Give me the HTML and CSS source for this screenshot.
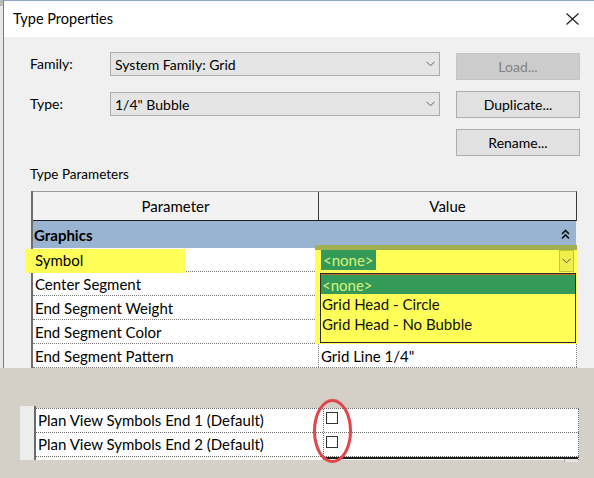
FILE: index.html
```html
<!DOCTYPE html>
<html>
<head>
<meta charset="utf-8">
<link rel="stylesheet" href="styles.css">
</head>
<body>
<div class="screen">
  <div class="top">
    <div class="edge"></div>
    <div class="win">
      <div class="titlebar">
        <span class="title">Type Properties</span>
        <svg class="close" width="13" height="12" viewBox="0 0 13 12"><path d="M0.5 0.5 L12.5 11.5 M12.5 0.5 L0.5 11.5" stroke="#1a1a1a" stroke-width="1.1" fill="none"/></svg>
      </div>
      <div class="content">
        <div class="form">
          <div class="lbl">Family:</div>
          <div class="combo c-first"><span>System Family: Grid</span><svg class="chev" width="9" height="6" viewBox="0 0 9 6"><path d="M0.5 0.8 L4.5 4.8 L8.5 0.8" stroke="#606060" stroke-width="1" fill="none"/></svg></div>
          <div class="btn disabled b-first">Load...</div>

          <div class="lbl l-second">Type:</div>
          <div class="combo c-second"><span>1/4" Bubble</span><svg class="chev" width="9" height="6" viewBox="0 0 9 6"><path d="M0.5 0.8 L4.5 4.8 L8.5 0.8" stroke="#606060" stroke-width="1" fill="none"/></svg></div>
          <div class="btn">Duplicate...</div>

          <div class="spacer"></div>
          <div class="spacer"></div>
          <div class="btn">Rename...</div>
        </div>
        <div class="tp-label">Type Parameters</div>
        <div class="ptable">
          <div class="thead">
            <div class="th th1">Parameter</div>
            <div class="th th2">Value</div>
          </div>
          <div class="group">
            <span>Graphics</span>
            <svg class="collapse" width="9" height="11" viewBox="0 0 9 11"><path d="M1 5 L4.5 1.5 L8 5 M1 9.5 L4.5 6 L8 9.5" stroke="#111" stroke-width="1.6" fill="none"/></svg>
          </div>
          <div class="row"><div class="c1"><span class="marked">Symbol</span></div><div class="c2"></div></div>
          <div class="row"><div class="c1">Center Segment</div><div class="c2"></div></div>
          <div class="row"><div class="c1">End Segment Weight</div><div class="c2"></div></div>
          <div class="row"><div class="c1">End Segment Color</div><div class="c2"></div></div>
          <div class="row"><div class="c1">End Segment Pattern</div><div class="c2">Grid Line 1/4"</div></div>
        </div>
      </div>
    </div>
  </div>

  <div class="bottom">
    <div class="strip"></div>
    <div class="btable">
      <div class="brow"><div class="b1">Plan View Symbols End 1 (Default)</div><div class="b2"><span class="check"></span></div></div>
      <div class="brow"><div class="b1">Plan View Symbols End 2 (Default)</div><div class="b2"><span class="check"></span></div></div>
      <div class="brow partial"><div class="b1"></div><div class="b2"><span class="field"></span><span class="mini"></span></div></div>
    </div>
  </div>

  <div class="hl-symbol"></div>

  <div class="dropdown">
    <div class="dd-bar"></div>
    <div class="dd-current">&lt;none&gt;</div>
    <div class="dd-btn"><svg width="9" height="6" viewBox="0 0 9 6"><path d="M0.5 0.8 L4.5 4.8 L8.5 0.8" stroke="#555" stroke-width="1" fill="none"/></svg></div>
    <div class="dd-list">
      <div class="dd-item sel">&lt;none&gt;</div>
      <div class="dd-item">Grid Head - Circle</div>
      <div class="dd-item">Grid Head - No Bubble</div>
    </div>
  </div>

  <div class="ring"></div>
</div>
</body>
</html>
```

FILE: styles.css
```css
* { box-sizing: border-box; }
html, body { margin: 0; padding: 0; }
body {
  width: 594px;
  height: 478px;
  overflow: hidden;
  font-family: "Segoe UI", Lato, "Liberation Sans", sans-serif;
  font-size: 15px;
  color: #000;
  background: #d4d0c8;
}
.screen {
  position: relative;
  width: 594px;
  height: 478px;
  display: flex;
  flex-direction: column;
}
.top {
  height: 368px;
  display: flex;
  overflow: hidden;
  flex-shrink: 0;
}
.edge {
  width: 3px;
  background: #e6e8e6;
  border-top: 6px solid #b9bdb9;
}
.win {
  flex: 1;
  border-left: 1px solid #4b86c9;
  border-top: 1px solid #8aa6c4;
  display: flex;
  flex-direction: column;
  background: #f0f0f0;
}
.titlebar {
  height: 37px;
  background: #fff;
  display: flex;
  align-items: center;
  justify-content: space-between;
  padding: 0 15px 2px 9px;
}
.title {
  font-size: 14.5px;
  color: #000;
}
.close { display: block; margin-top: 1px; }

.content {
  flex: 1;
  padding: 15px 0 0 26px;
}
.form {
  display: grid;
  grid-template-columns: 80px 330px 140px;
  grid-template-rows: 28px 27px 27px;
  row-gap: 11px;
  font-size: 14px;
}
.lbl {
  height: 24px;
  line-height: 24px;
}
.l-second { margin-top: 1px; }
.combo {
  height: 24px;
  background: #e5e5e5;
  border: 1px solid #acacac;
  display: flex;
  align-items: center;
  justify-content: space-between;
  padding: 0 4px 0 4px;
  font-size: 14px;
}
.c-second { margin-top: 1px; }
.chev { display: block; }
.btn {
  margin-left: 16px;
  height: 27px;
  background: #e1e1e1;
  border: 1px solid #adadad;
  display: flex;
  align-items: center;
  justify-content: center;
  font-size: 14px;
}
.btn.disabled {
  background: #cccccc;
  border-color: #c4c4c4;
  color: #838383;
}
.b-first { margin-top: 1px; }

.tp-label {
  margin-top: 9px;
  height: 18px;
  line-height: 18px;
  font-size: 13.5px;
  margin-left: 0;
}
.ptable {
  margin-top: 8px;
  margin-left: 1px;
  width: 546px;
  border-left: 2px solid #6e6e6e;
  background: #fff;
}
.thead {
  display: flex;
  height: 30px;
  border-top: 1px solid #9a9a9a;
  border-bottom: 1px solid #1e1e1e;
  border-right: 1px solid #3a3a3a;
  background: #f2f2f2;
}
.th {
  display: flex;
  align-items: center;
  justify-content: center;
}
.th1 { width: 286px; border-right: 1px solid #3a3a3a; }
.th2 { flex: 1; }
.group {
  height: 27px;
  background: #99b4d1;
  display: flex;
  align-items: center;
  justify-content: space-between;
  padding: 0 6px 0 1px;
  font-weight: bold;
  border-right: 1px solid #f0f0f0;
}
.collapse { display: block; }
.row {
  display: flex;
  height: 24px;
  border-bottom: 1px dotted #7a7a7a;
}
.c1 {
  width: 286px;
  padding-left: 2px;
  border-right: 1px dotted #7a7a7a;
  line-height: 24px;
  white-space: nowrap;
}
.c2 {
  flex: 1;
  padding-left: 2px;
  line-height: 24px;
  border-right: 1px dotted #7a7a7a;
}
.marked { position: relative; z-index: 3; }

.bottom {
  flex: 1;
  background: #d4d0c8;
  padding: 38px 0 0 20px;
  display: flex;
  align-items: flex-start;
}
.strip {
  width: 14px;
  height: 54px;
  background: #ededed;
}
.btable {
  width: 545px;
  height: 54px;
  border-left: 2px solid #6b6b6b;
  padding-top: 2px;
}
.brow {
  display: flex;
  height: 24px;
  background: #fff;
  border-top: 1px dotted #6a6a6a;
  border-right: 1px dotted #6a6a6a;
}
.b1 {
  width: 288px;
  padding-left: 2px;
  line-height: 23px;
  border-right: 1px dotted #6a6a6a;
  white-space: nowrap;
}
.b2 {
  flex: 1;
  padding: 3px 0 0 2px;
}
.check {
  display: block;
  width: 12px;
  height: 12px;
  border: 1px solid #333;
  background: #fff;
}
.brow.partial { height: 4px; }
.brow.partial .b2 {
  padding: 0;
  display: flex;
  border-top: 2px solid #1c1c1c;
  margin-top: 0;
}
.field { flex: 1; }
.mini {
  width: 14px;
  height: 3px;
  background: #e4e4e4;
  border-left: 1px solid #aaa;
}

/* highlighter mark on the Symbol label */
.hl-symbol {
  position: absolute;
  left: 25px;
  top: 249px;
  width: 160px;
  height: 24px;
  background: #ffff57;
  z-index: 2;
}

/* open dropdown with highlight */
.dropdown {
  position: absolute;
  left: 315px;
  top: 245px;
  width: 262px;
  height: 99px;
  background: #ffff57;
  z-index: 4;
}
.dd-bar {
  position: absolute;
  left: 0;
  top: 0;
  width: 262px;
  height: 5px;
  background: #a0af52;
}
.dd-current {
  position: absolute;
  left: 6px;
  top: 5px;
  width: 55px;
  height: 20px;
  line-height: 20px;
  padding-left: 2px;
  background: #339a58;
  color: #d8f27a;
}
.dd-btn {
  position: absolute;
  left: 244px;
  top: 5px;
  width: 15px;
  height: 22px;
  background: #eeee4c;
  border: 1px solid #c4c43a;
  display: flex;
  align-items: center;
  justify-content: center;
}
.dd-list {
  position: absolute;
  left: 5px;
  top: 28px;
  width: 256px;
  height: 70px;
  border: 1px solid #2a2a2a;
  background: #ffff57;
}
.dd-item {
  height: 20px;
  line-height: 20px;
  padding-left: 1px;
  color: #111;
}
.dd-item.sel {
  background: #339a58;
  color: #d8f27a;
  border-top: 1px dotted #c07a30;
}

.ring {
  position: absolute;
  left: 313px;
  top: 399px;
  width: 39px;
  height: 64px;
  border: 3px solid #e0474a;
  border-radius: 50%;
  box-shadow: 0 0 1px rgba(200, 60, 60, 0.6);
  z-index: 5;
}
```
